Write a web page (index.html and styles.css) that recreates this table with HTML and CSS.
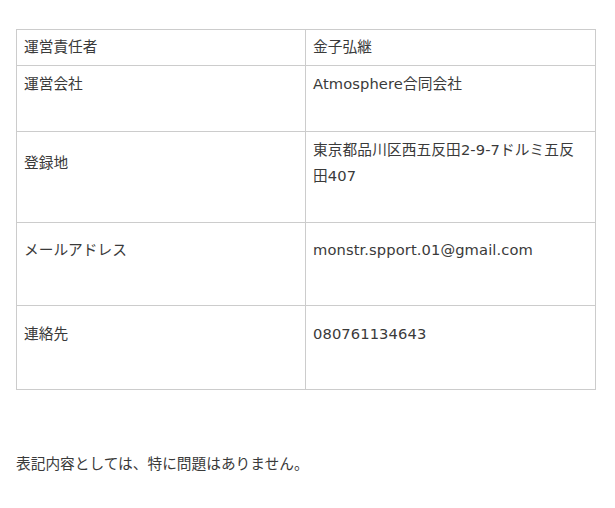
FILE: index.html
```html
<!DOCTYPE html>
<html lang="ja">
<head>
<meta charset="utf-8">
<title>運営者情報</title>
<link rel="stylesheet" href="styles.css">
</head>
<body>
<div class="page">
  <table class="info">
    <tr class="r1">
      <td class="label">運営責任者</td>
      <td class="value">金子弘継</td>
    </tr>
    <tr class="r2">
      <td class="label">運営会社</td>
      <td class="value">Atmosphere合同会社</td>
    </tr>
    <tr class="r3">
      <td class="label mid">登録地</td>
      <td class="value">東京都品川区西五反田2-9-7ドルミ五反<br>田407</td>
    </tr>
    <tr class="r4">
      <td class="label">メールアドレス</td>
      <td class="value">monstr.spport.01@gmail.com</td>
    </tr>
    <tr class="r5">
      <td class="label">連絡先</td>
      <td class="value">080761134643</td>
    </tr>
  </table>
  <p class="note">表記内容としては、特に問題はありません。</p>
</div>
</body>
</html>
```
FILE: styles.css
```css
html, body {
  margin: 0;
  padding: 0;
  background: #fff;
}
body {
  font-family: "DejaVu Sans", "Noto Sans CJK JP", sans-serif;
  font-size: 14.7px;
  line-height: 26px;
  color: #3a3a3a;
}
.page {
  padding: 29px 16px 0 16px;
}
.info {
  width: 580px;
  border-collapse: separate;
  border-spacing: 0;
  border-top: 1px solid #ccc;
  border-left: 1px solid #ccc;
  table-layout: fixed;
}
.info td {
  border-right: 1px solid #ccc;
  border-bottom: 1px solid #ccc;
  vertical-align: top;
  padding-left: 7px;
  padding-right: 7px;
  box-sizing: border-box;
}
.info td.label {
  width: 289px;
}
.value {
  letter-spacing: 0.1px;
}
.r1 td { padding-top: 4px; padding-bottom: 5px; }
.r2 td { padding-top: 5px; padding-bottom: 34px; }
.r3 td { padding-top: 5px; padding-bottom: 33px; }
.r3 td.mid { padding-top: 18px; }
.r4 td { padding-top: 14px; padding-bottom: 42px; }
.r5 td { padding-top: 15px; padding-bottom: 42px; }
.note {
  margin: 61px 0 0 0;
}
```
